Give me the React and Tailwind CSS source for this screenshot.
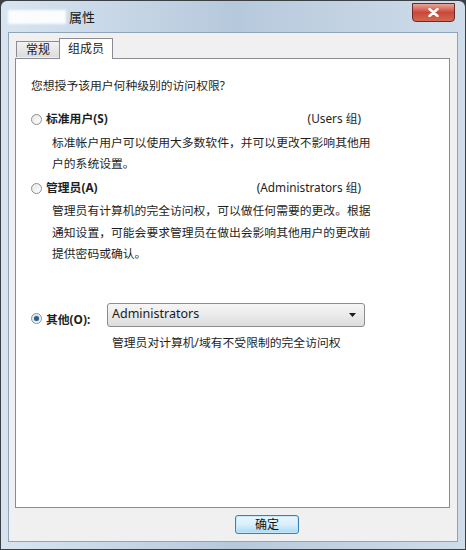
import React, { useState } from "react";

const font = { fontFamily: "'Noto Sans', 'Noto Sans CJK SC', sans-serif" };

function Radio({ checked }) {
  return (
    <span className="inline-block w-[11px] h-[11px] rounded-full border border-[#8e8f8f] bg-gradient-to-br from-[#e6e6e6] to-[#ffffff] shrink-0">
      {checked && <span className="block w-[5px] h-[5px] rounded-full bg-[#2b5f86] mx-auto mt-[2px] shadow-[0_0_2px_#6fb0e0]" />}
    </span>
  );
}

export default function App() {
  const [choice] = useState("other");

  return (
    <div className="w-[466px] h-[550px] bg-[#3c3f44] p-[1px]" style={font}>
      <div className="w-full h-full rounded-t-[6px] bg-gradient-to-r from-[#d8e5f1] via-[#b6c9dc] to-[#cfdcea] flex flex-col px-[7px] pb-[7px]">
        {/* title bar */}
        <div className="h-[31px] flex items-start shrink-0">
          <div className="mt-[9px] w-[58px] h-[14px] bg-white/90 blur-[1px]" />
          <span className="mt-[8px] ml-[3px] text-[13px] leading-[16px] text-[#1a1a1a]">属性</span>
          <div className="ml-auto mt-[2px] mr-[3px] w-[43px] h-[19px] rounded-b-[4px] border border-[#6b2a22] bg-gradient-to-b from-[#e9a597] via-[#c9483a] to-[#d06a50] flex items-center justify-center">
            <svg width="11" height="9" viewBox="0 0 11 9">
              <path d="M1.5 1 L9.5 8 M9.5 1 L1.5 8" stroke="#ffffff" strokeWidth="2.4" strokeLinecap="round" />
            </svg>
          </div>
        </div>

        {/* client area */}
        <div className="flex-1 bg-[#f0f0f0] border border-[#8fa3b9] flex flex-col pl-[6px] pr-[7px] pt-[4px]">
          {/* tabs */}
          <div className="flex items-end h-[21px] pl-[1px] relative z-10">
            <div className="h-[16px] px-[9px] border border-b-0 border-[#898c95] bg-gradient-to-b from-[#f2f2f2] to-[#dcdcdc] text-[12px] leading-[15px] text-[#1a1a1a] mb-[1px]">
              常规
            </div>
            <div className="h-[21px] px-[8px] -ml-[1px] border border-b-0 border-[#898c95] bg-white text-[12px] leading-[19px] text-[#1a1a1a] -mb-[1px]">
              组成员
            </div>
          </div>

          {/* panel */}
          <div className="h-[450px] bg-white border border-[#898c95] pl-[15px] text-[11.8px] text-[#1e1e1e]">
            <p className="mt-[19px] leading-[14px]">您想授予该用户何种级别的访问权限?</p>

            <div className="mt-[20px] flex items-center w-[330px] h-[14px]">
              <Radio checked={choice === "std"} />
              <span className="ml-[4px] font-bold">标准用户(S)</span>
              <span className="ml-auto">(Users 组)</span>
            </div>
            <p className="ml-[21px] mt-[6px] leading-[21px] whitespace-nowrap">
              标准帐户用户可以使用大多数软件，并可以更改不影响其他用
              <br />
              户的系统设置。
            </p>

            <div className="mt-[7px] flex items-center w-[330px] h-[14px]">
              <Radio checked={choice === "admin"} />
              <span className="ml-[4px] font-bold">管理员(A)</span>
              <span className="ml-auto">(Administrators 组)</span>
            </div>
            <p className="ml-[21px] mt-[5px] leading-[21.5px] whitespace-nowrap">
              管理员有计算机的完全访问权，可以做任何需要的更改。根据
              <br />
              通知设置，可能会要求管理员在做出会影响其他用户的更改前
              <br />
              提供密码或确认。
            </p>

            <div className="mt-[38px] flex items-start">
              <div className="flex items-center mt-[9px]">
                <Radio checked={choice === "other"} />
                <span className="ml-[4px] font-bold w-[60px] leading-[14px]">其他(O):</span>
              </div>
              <div className="ml-[1px] w-[258px] h-[24px] rounded-[3px] border border-[#8d8d8d] bg-gradient-to-b from-[#f6f6f6] via-[#ebebeb] to-[#dcdcdc] flex items-center pl-[4px] pr-[8px]">
                <span className="text-[12.5px] text-[#1a1a1a]">Administrators</span>
                <svg className="ml-auto" width="7" height="4" viewBox="0 0 7 4">
                  <path d="M0 0 H7 L3.5 4 Z" fill="#1a1a1a" />
                </svg>
              </div>
            </div>
            <p className="ml-[81px] mt-[8px] leading-[14px]">管理员对计算机/域有不受限制的完全访问权</p>
          </div>

          {/* buttons */}
          <div className="flex pl-[220px] mt-[7px]">
            <button className="w-[64px] h-[19px] rounded-[3px] border border-[#3c7fb1] bg-gradient-to-b from-[#eaf6fd] via-[#d9f0fc] to-[#a7d9f5] shadow-[inset_0_0_0_1px_#c5e8fb] text-[12px] leading-[15px] text-[#111]">
              确定
            </button>
          </div>
        </div>
      </div>
    </div>
  );
}
